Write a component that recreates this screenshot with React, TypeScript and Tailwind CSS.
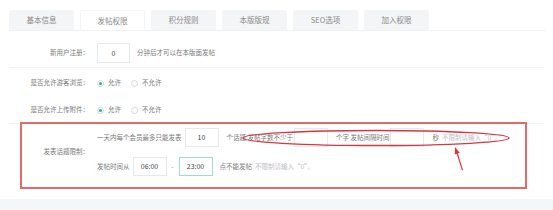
const tabs = ['基本信息', '发帖权限', '积分规则', '本版版规', 'SEO选项', '加入权限'];

function Radio({ checked, label }: { checked?: boolean; label: string }) {
  return (
    <span className="flex items-center">
      <span className="flex h-[7px] w-[7px] items-center justify-center rounded-full border border-[#d3d7dc] bg-white">
        {checked && <span className="h-[3px] w-[3px] rounded-full bg-[#1fb3a4]" />}
      </span>
      <span className="ml-[4px]">{label}</span>
    </span>
  );
}

function Box({ value, w = 'w-[34px]', h = 'h-[19px]', teal }: { value?: string; w?: string; h?: string; teal?: boolean }) {
  return (
    <span
      className={`flex ${w} ${h} items-center justify-center border bg-white text-[7px] text-[#444] ${
        teal ? 'border-[#9fdad5]' : 'border-[#e6e8eb]'
      }`}
    >
      {value}
    </span>
  );
}

export default function App() {
  return (
    <div
      className="relative h-[210px] w-[553px] overflow-hidden bg-white text-[6.5px] text-[#7a7a7a]"
      style={{ fontFamily: '"Noto Sans CJK SC", "Noto Sans", sans-serif' }}
    >
      {/* tabs */}
      <div className="ml-[9px] mr-[8px] flex gap-[6px] border-b border-[#f0f1f3] pt-[10px]">
        {tabs.map((t, i) => (
          <div
            key={t}
            className={`flex h-[20px] w-[65px] items-center justify-center rounded-t-[2px] text-[7.5px] text-[#888] ${
              i === 1 ? 'bg-white border border-b-0 border-[#f3f4f6]' : 'bg-[#f4f5f7]'
            }`}
          >
            {t}
          </div>
        ))}
      </div>

      {/* 新用户注册 */}
      <div className="mx-[9px] flex items-center border-b border-[#f0f1f3] pb-[4px] pt-[12px]">
        <div className="w-[80px] text-right">新用户注册：</div>
        <div className="ml-[8px] flex items-center">
          <Box value="0" w="w-[33px]" h="h-[20px]" />
          <span className="ml-[7px]">分钟后才可以在本版面发帖</span>
        </div>
      </div>

      <div className="mx-[9px] border-b border-[#f0f1f3] pb-[8px]">
        <div className="mt-[10px] flex h-[10px] items-center">
          <div className="w-[80px] text-right">是否允许游客浏览：</div>
          <div className="ml-[8px] flex items-center gap-[10px]">
            <Radio checked label="允许" />
            <Radio label="不允许" />
          </div>
        </div>
        <div className="mt-[17px] flex h-[10px] items-center">
          <div className="w-[80px] text-right">是否允许上传附件：</div>
          <div className="ml-[8px] flex items-center gap-[10px]">
            <Radio checked label="允许" />
            <Radio label="不允许" />
          </div>
        </div>
      </div>

      {/* 发表话题限制 */}
      <div className="mx-[9px] flex items-center pb-[23px] pt-[4px]">
        <div className="w-[80px] text-right">发表话题限制：</div>
        <div className="ml-[8px] flex flex-col gap-[10px]">
          <div className="flex items-center">
            <span>一天内每个会员最多只能发表</span>
            <span className="ml-[3px]">
              <Box value="10" />
            </span>
            <span className="ml-[8px]">个话题 发帖字数不少于</span>
            <span className="ml-[1px]">
              <Box w="w-[34px]" />
            </span>
            <span className="ml-[8px]">个字 发帖间隔时间</span>
            <span className="ml-[1px]">
              <Box w="w-[34px]" />
            </span>
            <span className="ml-[8px]">秒</span>
            <span className="ml-[3px] text-[#bcc0c5]">不限制请输入“0”。</span>
          </div>
          <div className="flex items-center">
            <span>发帖时间从</span>
            <span className="ml-[3px]">
              <Box value="06:00" />
            </span>
            <span className="mx-[4px] w-[4px] text-center">-</span>
            <Box value="23:00" teal />
            <span className="ml-[7px]">点不能发帖</span>
            <span className="ml-[3px] text-[#bcc0c5]">不限制请输入“0”。</span>
          </div>
        </div>
      </div>

      <div className="h-[12px] bg-[#f5f6f8]" />

      {/* annotation overlay */}
      <div className="pointer-events-none absolute left-[20px] top-[122px] h-[67px] w-[507px] border-2 border-[#e46a6a]" />
      <svg className="pointer-events-none absolute left-0 top-0" width="553" height="210">
        <ellipse cx="376" cy="138" rx="133" ry="7.5" fill="none" stroke="#d9363e" strokeWidth="1.3" />
        <polygon points="463,170 462,170.4 456.6,153.4 457.8,153" fill="#d9363e" />
        <polygon points="455,147 459.8,152.8 454.8,154.4" fill="#d9363e" />
      </svg>
    </div>
  );
}
